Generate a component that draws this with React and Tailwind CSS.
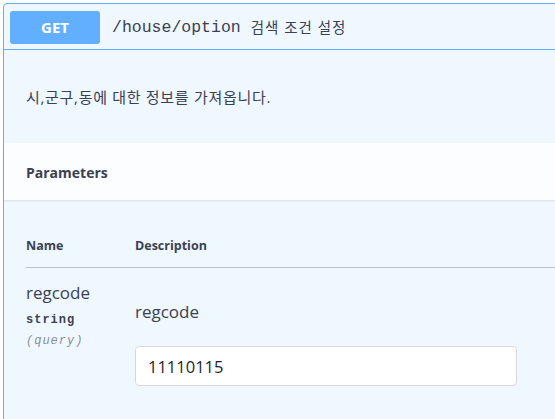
import React from 'react';

const sans = { fontFamily: '"Open Sans", "Noto Sans CJK KR", sans-serif' };
const mono = { fontFamily: '"Liberation Mono", "DejaVu Sans Mono", "Noto Sans CJK KR", monospace' };

const App = () => {
  return (
    <div className="w-[555px] h-[419px] overflow-hidden bg-white pl-[3px] pt-[3px]" style={sans}>
      <div className="w-[620px] h-[440px] border border-[#61affe] rounded-[4px] bg-[#eff7ff] text-[#3b4151]">
        {/* summary */}
        <div className="flex items-center pl-[6px] pt-[7px] pb-[5px] border-b border-[#61affe]">
          <div className="w-[90px] h-[33px] rounded-[3px] bg-[#61affe] text-white text-[15px] font-bold flex items-center justify-center">
            GET
          </div>
          <span className="ml-[12px] text-[16.5px] leading-[20px] font-medium text-[#3b4151]" style={mono}>
            /house/option
          </span>
          <span className="ml-[10px] text-[14.5px] leading-[20px] tracking-[1px] text-[#3b4151]">검색 조건 설정</span>
        </div>

        {/* description */}
        <div className="h-[93px] pl-[22px] pt-[37px]">
          <p className="text-[15px] leading-[20px] tracking-[0.7px] text-[#3b4151]">시,군구,동에 대한 정보를 가져옵니다.</p>
        </div>

        {/* section header */}
        <div className="h-[57px] pl-[22px] pt-[20px] bg-[#fcfdff] shadow-[0_1px_2px_rgba(0,0,0,0.1)]">
          <h4 className="text-[14px] font-bold leading-[20px] text-[#3b4151]">Parameters</h4>
        </div>

        {/* table */}
        <div className="pl-[22px]">
          <div className="flex pt-[37px] pb-[12px] border-b border-[#3b4151]/30 text-[12.5px] font-bold leading-[18px]">
            <div className="w-[109px]">Name</div>
            <div>Description</div>
          </div>
          <div className="flex pt-[14px]">
            <div className="w-[109px]">
              <div className="text-[17px] leading-[22px]">regcode</div>
              <div className="mt-[7px] text-[12px] font-bold leading-[18px] tracking-[1px]" style={mono}>string</div>
              <div className="mt-[4px] text-[12px] italic leading-[16px] tracking-[1px] text-[#3b4151]/60" style={mono}>(query)</div>
            </div>
            <div>
              <div className="mt-[19px] text-[17px] leading-[22px]">regcode</div>
              <input
                readOnly
                value="11110115"
                className="mt-[23px] w-[382px] h-[40px] px-[12px] bg-white border border-[#d9d9d9] rounded-[4px] text-[16.5px] text-[#1f1f1f] outline-none"
                style={sans}
              />
            </div>
          </div>
        </div>
      </div>
    </div>
  );
};

export default App;
